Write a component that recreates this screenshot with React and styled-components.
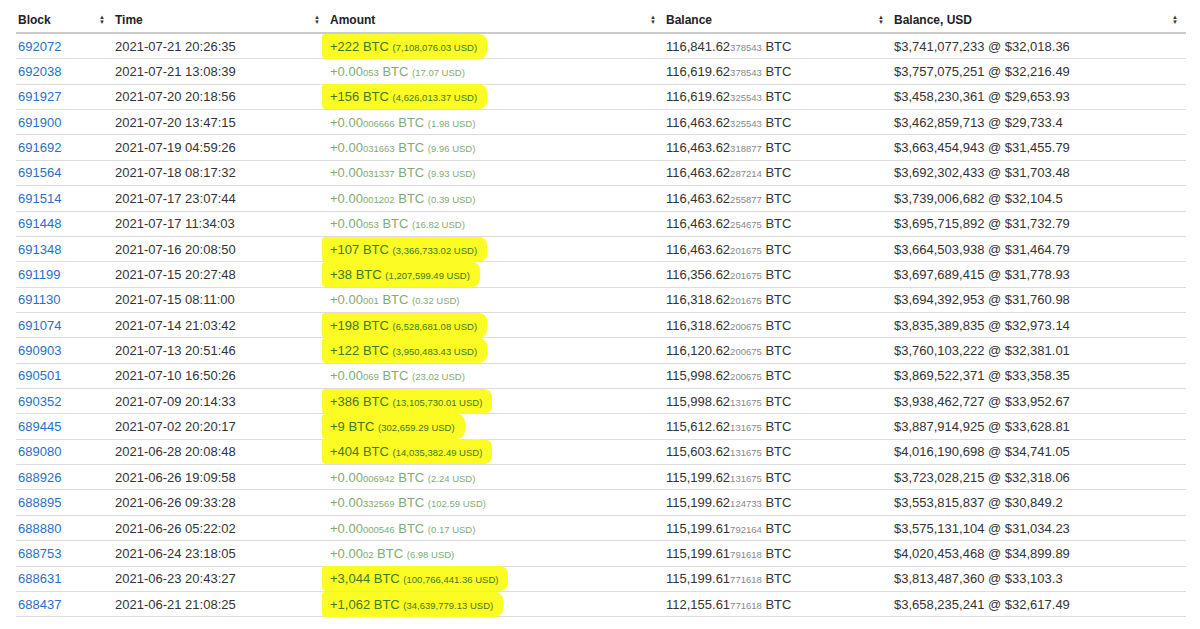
import React from "react";
import styled, { createGlobalStyle } from "styled-components";

const G = createGlobalStyle`
  body { margin: 0; background: #fff; font-family: "Liberation Sans", Arial, sans-serif; }
`;

const Wrap = styled.div`padding: 0 14px 0 16px;`;
const Table = styled.table`
  width: 1170px; border-collapse: collapse; font-size: 13px; color: #333;
`;
const Th = styled.th`
  text-align: left; font-weight: bold; font-size: 12px; color: #222;
  height: 24px; padding: 8px 0 0 2px; border-bottom: 2px solid #ccc;
  width: ${p => p.$w}px; position: relative;
`;
const Sort = styled.span`
  position: absolute; right: 8px; top: 15px; font-size: 6px; color: #333; line-height: 5px;
  display: flex; flex-direction: column;
`;
const Td = styled.td`
  height: 24.36px; padding: 0 0 0 2px; border-bottom: 1px solid #ddd; white-space: nowrap;
`;
const A = styled.a`color: #2a6fc9; text-decoration: none;`;
const Amt = styled.span`
  color: ${p => (p.$big ? "#3f7a17" : "#7fac74")};
  ${p => p.$big && "background:#fcfc24; padding:5px 10px 5px 8px; margin-left:-8px; border-radius:3px 8px 8px 4px;"}
`;
const Small = styled.span`font-size: 9.5px;`;
const Sm = styled.span`font-size: 9.5px; color: #888;`;

const rows = [
  ["692072","2021-07-21 20:26:35","+222","","7,108,076.03",1,"116,841.62","378543","$3,741,077,233 @ $32,018.36"],
  ["692038","2021-07-21 13:08:39","+0.00","053","17.07",0,"116,619.62","378543","$3,757,075,251 @ $32,216.49"],
  ["691927","2021-07-20 20:18:56","+156","","4,626,013.37",1,"116,619.62","325543","$3,458,230,361 @ $29,653.93"],
  ["691900","2021-07-20 13:47:15","+0.00","006666","1.98",0,"116,463.62","325543","$3,462,859,713 @ $29,733.4"],
  ["691692","2021-07-19 04:59:26","+0.00","031663","9.96",0,"116,463.62","318877","$3,663,454,943 @ $31,455.79"],
  ["691564","2021-07-18 08:17:32","+0.00","031337","9.93",0,"116,463.62","287214","$3,692,302,433 @ $31,703.48"],
  ["691514","2021-07-17 23:07:44","+0.00","001202","0.39",0,"116,463.62","255877","$3,739,006,682 @ $32,104.5"],
  ["691448","2021-07-17 11:34:03","+0.00","053","16.82",0,"116,463.62","254675","$3,695,715,892 @ $31,732.79"],
  ["691348","2021-07-16 20:08:50","+107","","3,366,733.02",1,"116,463.62","201675","$3,664,503,938 @ $31,464.79"],
  ["691199","2021-07-15 20:27:48","+38","","1,207,599.49",1,"116,356.62","201675","$3,697,689,415 @ $31,778.93"],
  ["691130","2021-07-15 08:11:00","+0.00","001","0.32",0,"116,318.62","201675","$3,694,392,953 @ $31,760.98"],
  ["691074","2021-07-14 21:03:42","+198","","6,528,681.08",1,"116,318.62","200675","$3,835,389,835 @ $32,973.14"],
  ["690903","2021-07-13 20:51:46","+122","","3,950,483.43",1,"116,120.62","200675","$3,760,103,222 @ $32,381.01"],
  ["690501","2021-07-10 16:50:26","+0.00","069","23.02",0,"115,998.62","200675","$3,869,522,371 @ $33,358.35"],
  ["690352","2021-07-09 20:14:33","+386","","13,105,730.01",1,"115,998.62","131675","$3,938,462,727 @ $33,952.67"],
  ["689445","2021-07-02 20:20:17","+9","","302,659.29",1,"115,612.62","131675","$3,887,914,925 @ $33,628.81"],
  ["689080","2021-06-28 20:08:48","+404","","14,035,382.49",1,"115,603.62","131675","$4,016,190,698 @ $34,741.05"],
  ["688926","2021-06-26 19:09:58","+0.00","006942","2.24",0,"115,199.62","131675","$3,723,028,215 @ $32,318.06"],
  ["688895","2021-06-26 09:33:28","+0.00","332569","102.59",0,"115,199.62","124733","$3,553,815,837 @ $30,849.2"],
  ["688880","2021-06-26 05:22:02","+0.00","000546","0.17",0,"115,199.61","792164","$3,575,131,104 @ $31,034.23"],
  ["688753","2021-06-24 23:18:05","+0.00","02","6.98",0,"115,199.61","791618","$4,020,453,468 @ $34,899.89"],
  ["688631","2021-06-23 20:43:27","+3,044","","100,766,441.36",1,"115,199.61","771618","$3,813,487,360 @ $33,103.3"],
  ["688437","2021-06-21 21:08:25","+1,062","","34,639,779.13",1,"112,155.61","771618","$3,658,235,241 @ $32,617.49"],
];

const S = () => <Sort><span>▲</span><span>▼</span></Sort>;

export default function App() {
  return (
    <Wrap>
      <G />
      <Table>
        <thead>
          <tr>
            <Th $w={95}>Block<S /></Th>
            <Th $w={213}>Time<S /></Th>
            <Th $w={334}>Amount<S /></Th>
            <Th $w={226}>Balance<S /></Th>
            <Th>Balance, USD<S /></Th>
          </tr>
        </thead>
        <tbody>
          {rows.map(r => (
            <tr key={r[0]}>
              <Td><A href="#">{r[0]}</A></Td>
              <Td>{r[1]}</Td>
              <Td>
                <Amt $big={r[5]}>{r[2]}<Small>{r[3]}</Small> BTC <Small>({r[4]} USD)</Small></Amt>
              </Td>
              <Td>{r[6]}<Sm>{r[7]}</Sm> BTC</Td>
              <Td>{r[8]}</Td>
            </tr>
          ))}
        </tbody>
      </Table>
    </Wrap>
  );
}
